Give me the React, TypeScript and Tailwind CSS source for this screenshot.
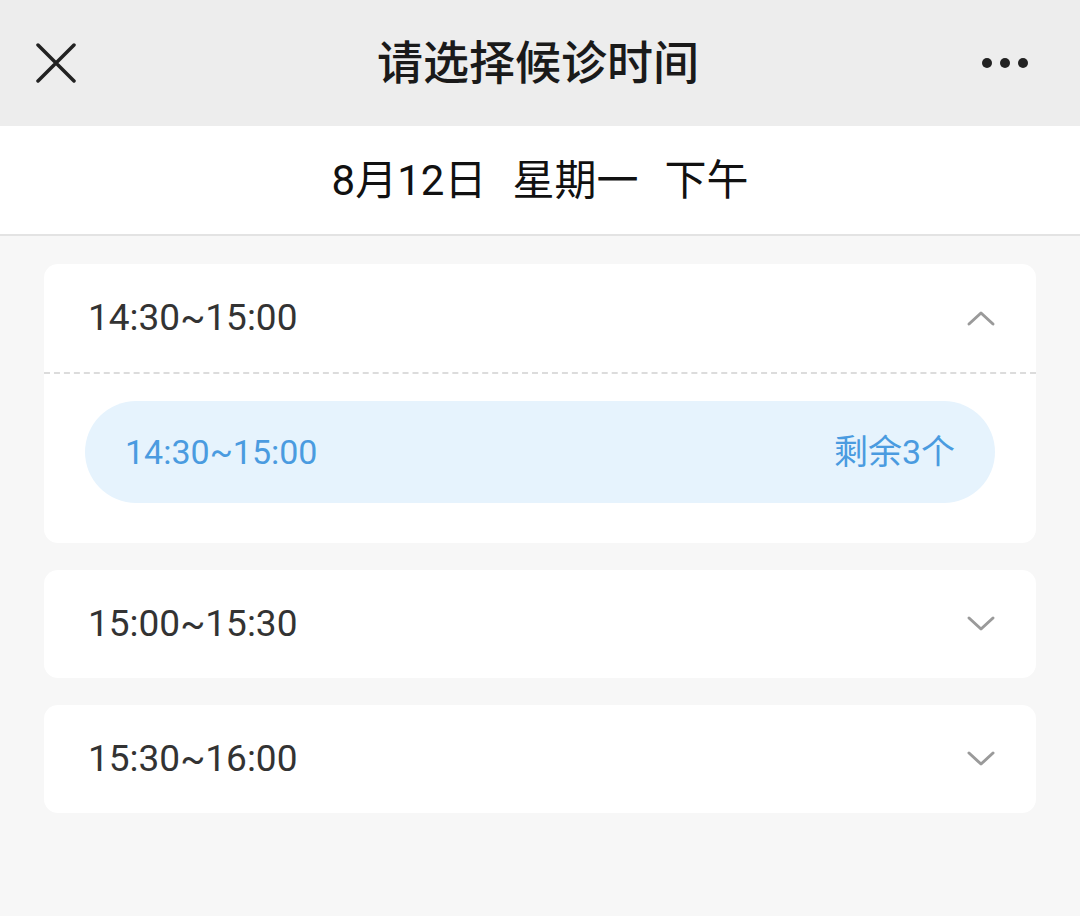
import React from "react";

const font = { fontFamily: 'Roboto, "Noto Sans CJK SC", sans-serif' };

function Chevron({ up }: { up?: boolean }) {
  return (
    <svg width="30" height="18" viewBox="0 0 30 18" fill="none">
      <path
        d={up ? "M3 15 L15 4 L27 15" : "M3 3 L15 14 L27 3"}
        stroke="#9a9a9a"
        strokeWidth="3"
        strokeLinecap="round"
        strokeLinejoin="round"
      />
    </svg>
  );
}

function Card({ time, open }: { time: string; open?: boolean }) {
  return (
    <div className="bg-white rounded-[14px] w-full">
      <div className="h-[108px] flex items-center justify-between pl-[44px] pr-[40px]">
        <span className="text-[37px] text-[#333333]">{time}</span>
        <Chevron up={open} />
      </div>
      {open && (
        <>
          <div className="border-t-2 border-dashed border-[#dcdcdc]" />
          <div className="px-[41px] pt-[27px] pb-[40px]">
            <div className="h-[102px] rounded-full bg-[#e6f3fd] flex items-center justify-between pl-[40px] pr-[40px]">
              <span className="text-[34px] text-[#4a9be0]">14:30~15:00</span>
              <span className="text-[34px] text-[#4a9be0]">剩余3个</span>
            </div>
          </div>
        </>
      )}
    </div>
  );
}

export default function App() {
  return (
    <div className="w-[1080px] h-[916px] bg-[#f7f7f7] overflow-hidden" style={font}>
      <div className="h-[126px] bg-[#ededed] flex items-center justify-between px-[36px]">
        <svg width="40" height="40" viewBox="0 0 40 40">
          <path d="M2 2 L38 38 M38 2 L2 38" stroke="#222" strokeWidth="3.5" strokeLinecap="round" />
        </svg>
        <span className="text-[46px] text-[#1a1a1a] font-medium pl-[18px]">请选择候诊时间</span>
        <div className="flex gap-[8px] pr-[16px]">
          <span className="w-[10px] h-[10px] rounded-full bg-[#222]" />
          <span className="w-[10px] h-[10px] rounded-full bg-[#222]" />
          <span className="w-[10px] h-[10px] rounded-full bg-[#222]" />
        </div>
      </div>
      <div className="h-[110px] bg-white border-b-2 border-[#e3e3e3] flex items-center justify-center gap-[26px] text-[42px] text-[#111]">
        <span>8月12日</span>
        <span>星期一</span>
        <span>下午</span>
      </div>
      <div className="flex flex-col gap-[27px] px-[44px] pt-[28px]">
        <Card time="14:30~15:00" open />
        <Card time="15:00~15:30" />
        <Card time="15:30~16:00" />
      </div>
    </div>
  );
}
